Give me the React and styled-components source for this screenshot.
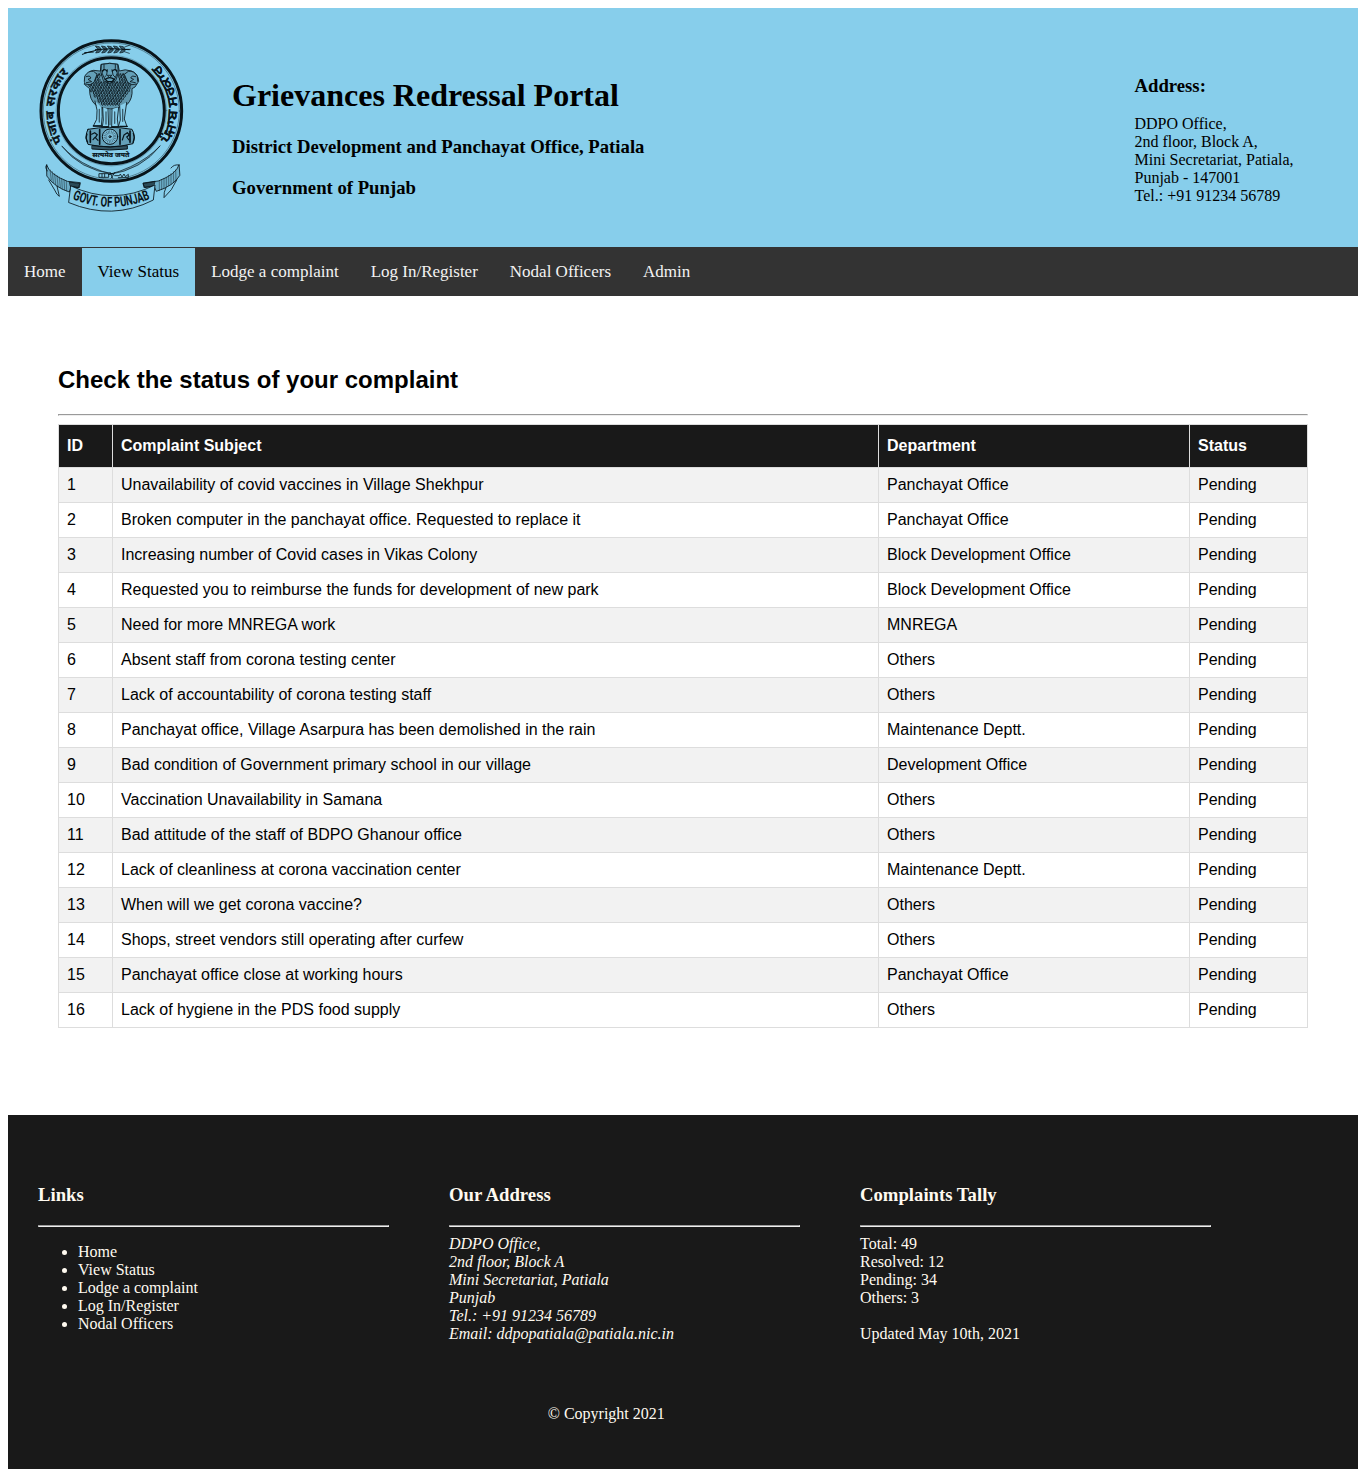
import React from "react";
import styled, { createGlobalStyle } from "styled-components";

const GlobalStyle = createGlobalStyle`
  body {
    margin: 8px;
    background: #fff;
    color: #000;
    font-family: "Liberation Serif", "Times New Roman", serif;
    font-size: 16px;
    line-height: 18px;
  }
`;

const Header = styled.header`
  display: flex;
  box-sizing: border-box;
  height: 239px;
  padding: 22px 60px 0 22px;
  background: #87ceeb;
`;

const Crest = styled.svg`
  flex: none;
  width: 165px;
  height: 190px;
`;

const Titles = styled.div`
  flex: 1;
  padding: 47px 0 0 37px;
`;

const PortalName = styled.h1`
  margin: 0 0 22px;
  font-size: 32px;
  line-height: 37px;
`;

const Subheading = styled.h3`
  margin: 0 0 ${(p) => p.$gap || 19}px;
  font-size: 18.72px;
  line-height: 22px;
`;

const OfficeAddress = styled.div`
  width: 163.5px;
  padding-top: 45px;
  white-space: nowrap;
`;

const Lines = styled.p`
  margin: 0;
  font-style: ${(p) => (p.$italic ? "italic" : "normal")};
  white-space: pre-line;
`;

const NavBar = styled.nav`
  display: flex;
  height: 48px;
  padding-top: 1px;
  background: #333;
`;

const NavLink = styled.a`
  padding: 14px 16px;
  font-size: 17px;
  line-height: 20px;
  color: ${(p) => (p.$active ? "#000" : "#f2f2f2")};
  background: ${(p) => (p.$active ? "#87ceeb" : "transparent")};
`;

const Main = styled.main`
  box-sizing: border-box;
  height: 819px;
  padding: 70px 50px 0;
  font-family: "Liberation Sans", Arial, sans-serif;
`;

const PageTitle = styled.h2`
  margin: 0 0 20px;
  font-size: 24px;
  line-height: 28px;
`;

const Rule = styled.hr`
  margin: 0 0 8px;
  border: 1px inset;
  color: gray;
`;

const Table = styled.table`
  width: 100%;
  table-layout: fixed;
  border-collapse: collapse;
`;

const Col = styled.col`
  width: ${(p) => p.$w}px;
`;

const Th = styled.th`
  padding: 12px 8px;
  border: 1px solid #ddd;
  background: #191919;
  color: #fff;
  text-align: left;
`;

const Td = styled.td`
  padding: 8px;
  border: 1px solid #ddd;
`;

const Row = styled.tr`
  &:nth-child(odd) {
    background: #f2f2f2;
  }
`;

const Footer = styled.footer`
  box-sizing: border-box;
  height: 354px;
  padding: 69px 30px 0;
  background: #191919;
  color: floralwhite;
`;

const FooterColumns = styled.div`
  display: grid;
  grid-template-columns: repeat(3, 351px);
  column-gap: 60px;
  height: 221px;
`;

const Links = styled.ul`
  margin: 16px 0 0;
  padding-left: 40px;
`;

const Copyright = styled.p`
  width: 1136.5px;
  margin: 0;
  text-align: center;
`;

const complaints = [
  ["Unavailability of covid vaccines in Village Shekhpur", "Panchayat Office"],
  ["Broken computer in the panchayat office. Requested to replace it", "Panchayat Office"],
  ["Increasing number of Covid cases in Vikas Colony", "Block Development Office"],
  ["Requested you to reimburse the funds for development of new park", "Block Development Office"],
  ["Need for more MNREGA work", "MNREGA"],
  ["Absent staff from corona testing center", "Others"],
  ["Lack of accountability of corona testing staff", "Others"],
  ["Panchayat office, Village Asarpura has been demolished in the rain", "Maintenance Deptt."],
  ["Bad condition of Government primary school in our village", "Development Office"],
  ["Vaccination Unavailability in Samana", "Others"],
  ["Bad attitude of the staff of BDPO Ghanour office", "Others"],
  ["Lack of cleanliness at corona vaccination center", "Maintenance Deptt."],
  ["When will we get corona vaccine?", "Others"],
  ["Shops, street vendors still operating after curfew", "Others"],
  ["Panchayat office close at working hours", "Panchayat Office"],
  ["Lack of hygiene in the PDS food supply", "Others"],
];

const navItems = ["Home", "View Status", "Lodge a complaint", "Log In/Register", "Nodal Officers", "Admin"];

// Staggered rows of short curls that make up the lions' manes.
const curls = [];
for (let r = 0; r < 12; r++) {
  const y = 134 + r * 8;
  const half = r < 7 ? 62 - Math.abs(r - 4) * 2 : 58 - (r - 6) * 6;
  for (let x = 241 - half + (r % 2) * 4; x < 241 + half; x += 8) {
    if (y < 158 && Math.abs(x - 238) < 26) continue;
    curls.push(`M${x - 3} ${y - 3}q0 7 4 7q3-1 2-6`);
  }
}

function Emblem() {
  return (
    <Crest viewBox="0 0 495 570" fill="none" stroke="#08141a" strokeLinecap="round" strokeLinejoin="round">
      <defs>
        <path id="arcLeft" d="M98 334A172 172 0 0 1 120 124" />
        <path id="arcRight" d="M414 340A196 196 0 0 0 371 94" />
        <path id="arcRibbon" d="M127 507Q247 556 370 503" />
      </defs>

      <circle cx="244" cy="243" r="211" strokeWidth="9" />
      <circle cx="244" cy="243" r="204" strokeWidth="2" opacity=".6" />
      <circle cx="244" cy="242" r="159" strokeWidth="9" />
      <circle cx="244" cy="242" r="166" strokeWidth="1.5" opacity=".5" />

      <g fill="#08141a" strokeWidth=".6" fontFamily='"Noto Sans", "Noto Sans Devanagari", sans-serif' fontWeight="700">
        <text fontSize="37">
          <textPath href="#arcLeft" textLength="222" lengthAdjust="spacingAndGlyphs">पंजाब सरकार</textPath>
        </text>
        <text fontSize="38">
          <textPath href="#arcRight" textLength="256" lengthAdjust="spacingAndGlyphs">ਪੰਜਾਬ ਸਰਕਾਰ</textPath>
        </text>
        <text x="187" y="381" fontSize="21" textLength="111" lengthAdjust="spacingAndGlyphs">सत्यमेव जयते</text>
      </g>

      {/* wheat ear */}
      <g strokeWidth="3">
        <path d="M157 73q20-8 42-12M164 68l26-2M196 59q50-6 102 0" />
        {[203, 221, 239, 257, 275].map((x) => (
          <path key={x} d={`M${x} 57l-7-9l12 2l5 7zM${x} 60l-6 9l11-2l6-7z`} strokeWidth="2" fill="#08141a" fillOpacity=".6" />
        ))}
        <path d="M284 51l14-5M287 58h14M283 65l15 5" strokeWidth="2" />
      </g>

      {/* crossed blades */}
      <g strokeWidth="2">
        <path d="M96 349Q150 420 250 432Q218 427 184 411Q130 387 96 349" fill="#08141a" fillOpacity=".25" />
        <path d="M390 348Q335 420 235 434Q270 425 302 410Q355 385 390 348" fill="#08141a" fillOpacity=".25" />
        <path d="M208 431h28v11h-28zM216 432v9M224 432v9M240 427l8 18M255 427l-12 18M254 437h14l3-5 5 9 6-9 4 8 9-7v10h-30" strokeWidth="2.5" />
      </g>

      {/* lions */}
      <g strokeWidth="2.5">
        <path
          d="M214 103q26-7 50 0l4 20q17-7 37 0q20 8 21 31l-11 17-9 5q3 30-15 48l-24 8-24 5-25-3-20-8q-21-18-19-50l-16-13 3-20q6-20 25-22l19 2z"
          fill="#08141a"
          fillOpacity=".3"
        />
        <path d={curls.join("")} strokeWidth="2.6" />
        <path d="M215 103q25-6 48 0l2 25-8 24-18 8-19-8-7-24z" fill="#64a0b8" />
        <path d="M222 104v12l-6 13 9 20M256 104v12l6 13-9 20M232 119l-2 16-6 6M246 119l3 16 6 6M233 136h13l-7 6z" />
        <path d="M217 123q7-8 14 0M247 123q8-8 14 0M226 148q13-10 27 0l-7 7h-13z" strokeWidth="4" />
        <path d="M163 154l1-15q10-18 27-15l10 9-9 24-12 7-14-2M168 140l10-2 5 6-9 4 11 7-16 3" fill="#64a0b8" />
        <path d="M323 154l-1-15q-10-18-27-15l-12 9 10 24 13 7 14-2M317 140l-10-2-5 6 9 4-11 7 16 3" fill="#64a0b8" />
        <path d="M195 213q10 28 5 55l-10 20h24q4-28 2-55M218 232l2 38-3 20h19l-2-53M246 237l-1 53h20l-3-23 4-35M269 227l2 43-6 20h26l-8-23 7-50" fill="#87ceeb" />
        <path d="M190 288h24M216 291h20M245 291h20M270 289h22" strokeWidth="4" />
        <path d="M208 238v38M228 246v36M254 246v34M278 238v36M240 240v44" strokeWidth="4" opacity=".6" />
      </g>

      {/* abacus with the wheel */}
      <g strokeWidth="3">
        <path d="M174 298q65-12 132 0q12 20 3 43q-68 18-135 2q-12-24 0-45z" fill="#64a0b8" />
        <path d="M181 303v34M209 299v44M270 299v44M300 303v34" strokeWidth="5" />
        <circle cx="240" cy="320" r="23" fill="#7bbcd7" />
        <circle cx="240" cy="320" r="14" strokeWidth="10" strokeDasharray="1.5 3" strokeLinecap="butt" opacity=".6" />
        <circle cx="240" cy="320" r="3" />
        <path d="M185 313l9-5 8 6-6 9 8 8M189 329l6-7M277 330l5-15 10-7 6 7-8 6 7 9M171 312l-3 12 5 13M310 310l3 13-4 14" strokeWidth="3.5" />
        <path d="M187 347q53 8 105 0v10q-53 6-105 0z" fill="#08141a" fillOpacity=".65" />
      </g>

      {/* ribbon */}
      <g strokeWidth="2.5">
        <path d="M50 405q8 28 62 49l39 4-3 15-23-4-7 17q-44-14-67-47z" fill="#6caec9" />
        <path d="M447 405q-8 28-62 48l-46 6 3 14 30-5 7 16q52-16 70-47z" fill="#6caec9" />
        <path d="M50 405q-7 5 2 18M56 450l18 30q6 15 14 19l-7-31M447 405q-15-3-24 9M440 450l-16 29-22 24q-1-18 5-28" />
        <path d="M119 456l31 5-6 13-22-5zM374 454l-35 7 6 11 25-4z" fill="#08141a" fillOpacity=".65" />
        <path
          d="M60 419l4 31M67 425l3 33M74 431l3 33M81 436l3 33M88 441l3 32M95 445l2 33M102 449l2 31M109 453l1 30M437 419l1 34M430 425l1 33M423 431v32M416 436v31M409 441v31M402 445v31M395 449v30M388 452v30"
          strokeWidth="1.8"
          opacity=".7"
        />
        <path d="M123 468Q248 528 375 465L370 510Q247 573 117 518z" fill="#87ceeb" />
      </g>
      <text fontFamily='Roboto, "Liberation Sans", sans-serif' fontSize="42" fontWeight="700" fill="#08141a" stroke="none">
        <textPath href="#arcRibbon" textLength="240" lengthAdjust="spacingAndGlyphs">GOVT. OF PUNJAB</textPath>
      </text>
    </Crest>
  );
}

export default function App() {
  return (
    <>
      <GlobalStyle />
      <Header>
        <Emblem />
        <Titles>
          <PortalName>Grievances Redressal Portal</PortalName>
          <Subheading>District Development and Panchayat Office, Patiala</Subheading>
          <Subheading>Government of Punjab</Subheading>
        </Titles>
        <OfficeAddress>
          <Subheading $gap={18}>Address:</Subheading>
          <Lines>{"DDPO Office,\n2nd floor, Block A,\nMini Secretariat, Patiala,\nPunjab - 147001\nTel.: +91 91234 56789"}</Lines>
        </OfficeAddress>
      </Header>
      <NavBar>
        {navItems.map((item) => (
          <NavLink key={item} $active={item === "View Status"}>{item}</NavLink>
        ))}
      </NavBar>
      <Main>
        <PageTitle>Check the status of your complaint</PageTitle>
        <Rule />
        <Table>
          <colgroup>
            <Col $w={54} />
            <Col $w={766} />
            <Col $w={311} />
            <Col $w={118} />
          </colgroup>
          <thead>
            <tr>
              <Th>ID</Th>
              <Th>Complaint Subject</Th>
              <Th>Department</Th>
              <Th>Status</Th>
            </tr>
          </thead>
          <tbody>
            {complaints.map(([subject, department], i) => (
              <Row key={subject}>
                <Td>{i + 1}</Td>
                <Td>{subject}</Td>
                <Td>{department}</Td>
                <Td>Pending</Td>
              </Row>
            ))}
          </tbody>
        </Table>
      </Main>
      <Footer>
        <FooterColumns>
          <section>
            <Subheading>Links</Subheading>
            <Rule />
            <Links>
              {navItems.slice(0, 5).map((item) => (
                <li key={item}>{item}</li>
              ))}
            </Links>
          </section>
          <section>
            <Subheading>Our Address</Subheading>
            <Rule />
            <Lines $italic>
              {"DDPO Office,\n2nd floor, Block A\nMini Secretariat, Patiala\nPunjab\nTel.: +91 91234 56789\nEmail: ddpopatiala@patiala.nic.in"}
            </Lines>
          </section>
          <section>
            <Subheading>Complaints Tally</Subheading>
            <Rule />
            <Lines>{"Total: 49\nResolved: 12\nPending: 34\nOthers: 3\n\nUpdated May 10th, 2021"}</Lines>
          </section>
        </FooterColumns>
        <Copyright>© Copyright 2021</Copyright>
      </Footer>
    </>
  );
}
